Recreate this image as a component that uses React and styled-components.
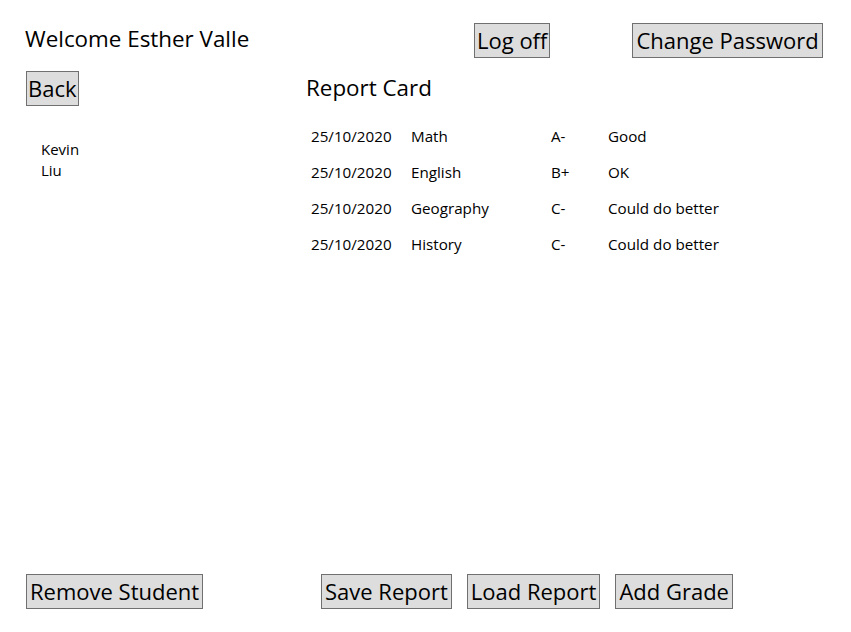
import React from 'react';
import styled, { createGlobalStyle } from 'styled-components';

const GlobalStyle = createGlobalStyle`
    html, body {
        margin: 0;
        padding: 0;
        background: #ffffff;
    }
    body {
        font-family: 'Open Sans', 'Noto Sans', sans-serif;
        color: #000000;
    }
`;

const Page = styled.div`
    display: flex;
    flex-direction: column;
    min-height: 100vh;
    box-sizing: border-box;
    padding: 23px 0 23px 0;
`;

const Header = styled.div`
    display: flex;
    align-items: center;
    padding-left: 25px;
    height: 35px;
`;

const Welcome = styled.div`
    width: 449px;
    font-size: 22.4px;
    line-height: 32px;
    margin-top: -3px;
`;

const Button = styled.button`
    box-sizing: border-box;
    height: 35px;
    padding: 0 ${props => props.pad ?? 3}px;
    margin-left: ${props => props.offset || 0}px;
    background: #dddddd;
    border: 1px solid #707070;
    border-radius: 0;
    font-family: inherit;
    font-size: 22px;
    line-height: 31px;
    color: #000000;
    cursor: pointer;
`;

const Body = styled.div`
    flex: 1;
    display: grid;
    grid-template-columns: 280px 1fr;
    padding-left: 26px;
    margin-top: 13px;
`;

const Sidebar = styled.div`
    display: flex;
    flex-direction: column;
    align-items: flex-start;
`;

const StudentList = styled.ul`
    list-style: none;
    margin: 33px 0 0 15px;
    padding: 0;
    font-size: 15px;
    line-height: 21px;
`;

const Main = styled.div`
    display: flex;
    flex-direction: column;
`;

const Title = styled.h2`
    margin: 0;
    font-weight: normal;
    font-size: 22.4px;
    line-height: 32px;
    margin-top: 1px;
`;

const Table = styled.div`
    display: grid;
    grid-template-columns: 100px 140px 57px auto;
    grid-auto-rows: 36px;
    align-items: center;
    margin: 14px 0 0 5px;
    font-size: 15.2px;
    justify-content: start;
`;

const Cell = styled.div`
    white-space: nowrap;
`;

const Footer = styled.div`
    display: grid;
    grid-template-columns: 295px auto;
    padding-left: 26px;
`;

const FooterGroup = styled.div`
    display: flex;
    gap: 15px;
`;

const students = ['Kevin', 'Liu'];

const grades = [
    { date: '25/10/2020', subject: 'Math', grade: 'A-', comment: 'Good' },
    { date: '25/10/2020', subject: 'English', grade: 'B+', comment: 'OK' },
    { date: '25/10/2020', subject: 'Geography', grade: 'C-', comment: 'Could do better' },
    { date: '25/10/2020', subject: 'History', grade: 'C-', comment: 'Could do better' },
];

export default function App() {
    return (
        <Page>
            <GlobalStyle />
            <Header>
                <Welcome>Welcome Esther Valle</Welcome>
                <Button pad={2}>Log off</Button>
                <Button offset={82}>Change Password</Button>
            </Header>
            <Body>
                <Sidebar>
                    <Button pad={1}>Back</Button>
                    <StudentList>
                        {students.map(s => (
                            <li key={s}>{s}</li>
                        ))}
                    </StudentList>
                </Sidebar>
                <Main>
                    <Title>Report Card</Title>
                    <Table>
                        {grades.map((g, i) => (
                            <React.Fragment key={i}>
                                <Cell>{g.date}</Cell>
                                <Cell>{g.subject}</Cell>
                                <Cell>{g.grade}</Cell>
                                <Cell>{g.comment}</Cell>
                            </React.Fragment>
                        ))}
                    </Table>
                </Main>
            </Body>
            <Footer>
                <div>
                    <Button>Remove Student</Button>
                </div>
                <FooterGroup>
                    <Button>Save Report</Button>
                    <Button>Load Report</Button>
                    <Button>Add Grade</Button>
                </FooterGroup>
            </Footer>
        </Page>
    );
}
